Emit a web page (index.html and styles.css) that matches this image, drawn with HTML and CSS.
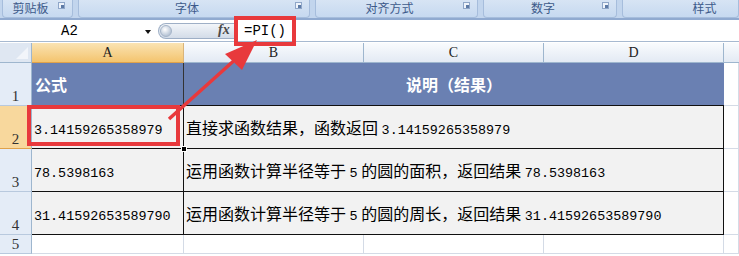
FILE: index.html
```html
<!DOCTYPE html>
<html lang="zh">
<head>
<meta charset="utf-8">
<link rel="stylesheet" href="styles.css">
</head>
<body>
<div class="ribbon">
  <div class="group g1"><span class="gl">剪贴板</span><span class="launch"></span></div>
  <div class="group g2"><span class="gl">字体</span><span class="launch"></span></div>
  <div class="group g3"><span class="gl">对齐方式</span><span class="launch"></span></div>
  <div class="group g4"><span class="gl">数字</span><span class="launch"></span></div>
  <div class="group g5"><span class="gl">样式</span></div>
</div>
<div class="fbar">
  <div class="namebox"><span class="name">A2</span><span class="drop"></span></div>
  <div class="pill"><span class="knob"></span><span class="fx">fx</span></div>
  <div class="formula">=PI()</div>
</div>
<div class="sheet">
  <div class="corner"><span class="tri"></span></div>
  <div class="ch sel">A</div>
  <div class="ch">B</div>
  <div class="ch">C</div>
  <div class="ch">D</div>
  <div class="ch last"></div>

  <div class="rh">1</div>
  <div class="hd a">公式</div>
  <div class="hd bd">说明（结果）</div>
  <div class="blank"></div>

  <div class="rh selr">2</div>
  <div class="cell a"><span class="t"><span class="num">3.14159265358979</span></span></div>
  <div class="cell bd"><span class="t">直接求函数结果，函数返回 <span class="num">3.14159265358979</span></span></div>
  <div class="blank"></div>

  <div class="rh">3</div>
  <div class="cell a"><span class="t"><span class="num">78.5398163</span></span></div>
  <div class="cell bd"><span class="t">运用函数计算半径等于 <span class="num">5</span> 的圆的面积，返回结果 <span class="num">78.5398163</span></span></div>
  <div class="blank"></div>

  <div class="rh">4</div>
  <div class="cell a"><span class="t"><span class="num">31.41592653589790</span></span></div>
  <div class="cell bd"><span class="t">运用函数计算半径等于 <span class="num">5</span> 的圆的周长，返回结果 <span class="num">31.41592653589790</span></span></div>
  <div class="blank"></div>

  <div class="rh r5">5</div>
  <div class="blank"></div>
  <div class="blank"></div>
  <div class="blank"></div>
  <div class="blank"></div>
  <div class="blank"></div>
</div>

<div class="box box-formula"></div>
<div class="box box-cell"></div>
<div class="handle"></div>
<svg class="arrow" width="739" height="256" viewBox="0 0 739 256">
  <line x1="169" y1="119" x2="238" y2="57" stroke="#e8393c" stroke-width="3.5"/>
  <polygon points="257,40 242,70 225,54" fill="#e8393c"/>
</svg>
</body>
</html>
```
FILE: styles.css
```css
* { box-sizing: border-box; }
body {
  margin: 0;
  width: 739px;
  height: 256px;
  overflow: hidden;
  background: #ffffff;
  font-family: "Noto Sans CJK SC", sans-serif;
  position: relative;
}

/* ribbon strip */
.ribbon {
  height: 20px;
  display: flex;
  gap: 5px;
  padding-left: 2px;
  background: #c2d5ed;
  border-bottom: 2px solid #90aad0;
  box-shadow: 0 1px 0 #d3e0f0;
}
.group {
  flex: none;
  height: 18px;
  position: relative;
  display: flex;
  justify-content: center;
  align-items: flex-start;
  padding-right: 14px;
  color: #3d5a8a;
  background: linear-gradient(#d7e4f4, #c6d9f0);
  border: 1px solid #a6bddc;
  border-top: none;
  border-radius: 0 0 4px 4px;
}
.gl {
  font-size: 12px;
  line-height: 17px;
  margin-top: -1px;
}
.g1 { width: 71px; }
.g2 { width: 232px; }
.g3 { width: 163px; }
.g4 { width: 134px; }
.g5 { width: 117px; padding-right: 0; padding-left: 48px; }
.launch {
  position: absolute;
  right: 7px;
  top: 2px;
  width: 7px;
  height: 7px;
  border: 1px solid #8fa6c8;
  background: #eef3fa;
}
.launch::after {
  content: "";
  position: absolute;
  right: 0;
  bottom: 0;
  width: 3px;
  height: 3px;
  background: #5d7aa5;
}

/* formula bar */
.fbar {
  height: 22px;
  display: flex;
  align-items: center;
  background: #ffffff;
  border-bottom: 1px solid #a7b9d0;
}
.namebox {
  width: 158px;
  height: 20px;
  position: relative;
  display: flex;
  align-items: center;
}
.name {
  margin-left: 61px;
  font-family: "Liberation Mono", monospace;
  font-size: 14px;
  color: #000;
}
.drop {
  position: absolute;
  left: 145px;
  top: 9px;
  width: 0;
  height: 0;
  border-left: 3.5px solid transparent;
  border-right: 3.5px solid transparent;
  border-top: 4px solid #111;
}
.pill {
  width: 78px;
  height: 16px;
  position: relative;
  border: 1px solid #9eafc6;
  border-right: none;
  border-radius: 8px 0 0 8px;
  background: linear-gradient(#f2f5f9, #d3dce8);
}
.knob {
  position: absolute;
  left: 1px;
  top: 1px;
  width: 12px;
  height: 12px;
  border-radius: 50%;
  background: radial-gradient(circle at 40% 35%, #ffffff, #b9c6d7 70%);
  border: 1px solid #a5b4c8;
}
.fx {
  position: absolute;
  left: 59px;
  top: -2px;
  font-family: "Liberation Serif", serif;
  font-style: italic;
  font-weight: bold;
  font-size: 14px;
  color: #4a4a4a;
}
.formula {
  padding-left: 8px;
  font-family: "Liberation Mono", monospace;
  font-size: 14px;
  color: #000;
}

/* sheet */
.sheet {
  margin-top: 1px;
  display: grid;
  grid-template-columns: 32px 152px 180px 180px 180px 15px;
  grid-template-rows: 20px 43px 43px 43px 43px 19px;
}
.corner {
  position: relative;
  background: #dfe7f2;
  border-right: 1px solid #9eb6ce;
  border-bottom: 1px solid #9eb6ce;
}
.tri {
  position: absolute;
  right: 3px;
  bottom: 3px;
  width: 0;
  height: 0;
  border-left: 12px solid transparent;
  border-bottom: 12px solid #f2f5fa;
}
.ch {
  display: flex;
  align-items: center;
  justify-content: center;
  font-family: "Liberation Serif", serif;
  font-size: 14px;
  color: #222;
  background: linear-gradient(#f9fbfd, #e3eaf4);
  border-right: 1px solid #9eb6ce;
  border-bottom: 1px solid #9eb6ce;
}
.ch.sel {
  background: linear-gradient(#fae3b3, #f4c46e);
  border-bottom-color: #e0a24a;
  border-right-color: #d9b47a;
}
.ch.last { border-right: none; }
.rh {
  display: flex;
  align-items: flex-end;
  justify-content: center;
  padding-bottom: 1px;
  font-family: "Liberation Serif", serif;
  font-size: 15px;
  line-height: 15px;
  color: #333;
  background: #e4ecf7;
  border-right: 1px solid #9eb6ce;
  border-bottom: 1px solid #b8c9de;
}
.rh.selr {
  background: #f8d89d;
  border-bottom-color: #e0a24a;
}
.hd {
  display: flex;
  align-items: center;
  font-size: 16px;
  font-weight: bold;
  color: #ffffff;
  background: #6a80b2;
  border-bottom: 1px solid #111;
}
.hd.a { padding-left: 3px; border-right: 1px solid #333; }
.hd.bd { grid-column: span 3; justify-content: center; }
.cell {
  display: flex;
  align-items: center;
  font-size: 16px;
  color: #000;
  background: #f2f2f2;
  border-bottom: 1px solid #111;
  border-right: 1px solid #111;
  padding-left: 2px;
}
.t { white-space: pre; }
.cell.bd { grid-column: span 3; }
.num {
  font-family: "Liberation Mono", monospace;
  font-size: 13.4px;
}
.blank {
  background: #ffffff;
  border-right: 1px solid #d4dbe6;
  border-bottom: 1px solid #d4dbe6;
}

/* annotations */
.box {
  position: absolute;
  border: 4px solid #e8393c;
}
.box-formula { left: 234px; top: 16px; width: 62px; height: 30px; }
.box-cell { left: 27px; top: 105px; width: 153px; height: 41px; }
.handle {
  position: absolute;
  left: 181px;
  top: 146px;
  width: 6px;
  height: 6px;
  background: #000;
  border: 1px solid #fff;
}
.arrow { position: absolute; left: 0; top: 0; pointer-events: none; }
```
